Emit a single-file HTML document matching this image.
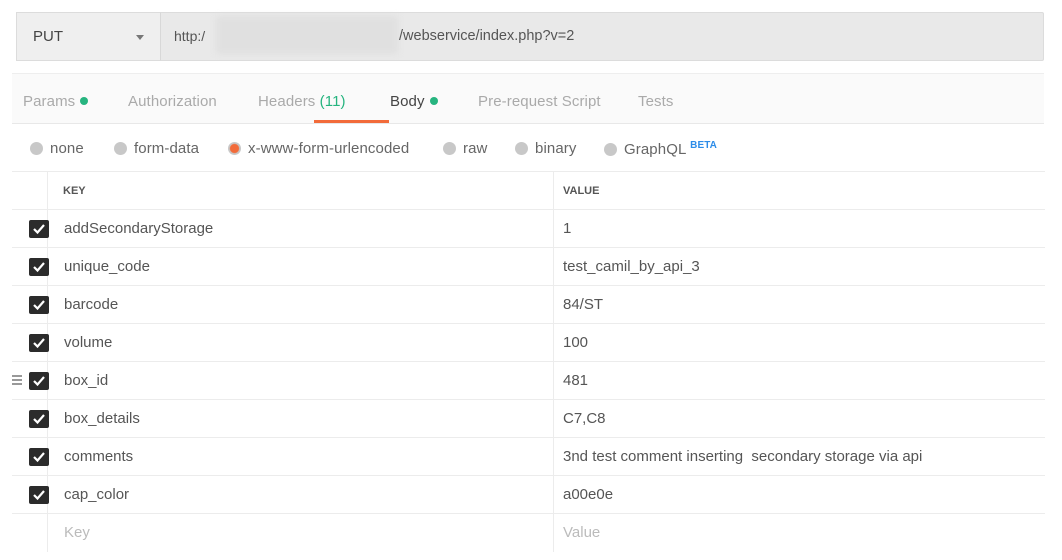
<!DOCTYPE html>
<html><head><style>
*{margin:0;padding:0;box-sizing:border-box}
body{width:1062px;height:560px;background:#fff;font-family:"Liberation Sans",sans-serif;color:#555;position:relative;overflow:hidden;font-size:15px}
.abs{position:absolute}
.url{left:16px;top:12px;width:1028px;height:49px;background:#e9e9e9;border:1px solid #dcdcdc;border-radius:2px}
.meth{left:16px;top:12px;width:145px;height:49px;background:#efefef;border:1px solid #dcdcdc;border-right:1px solid #d8d8d8}
.tabs{left:12px;top:73px;width:1032px;height:51px;background:#fafafa;border-top:1px solid #eee;border-bottom:1px solid #e8e8e8}
.t{top:93px;font-size:15px;color:#aaa;letter-spacing:0.1px}
.dot{display:inline-block;width:8px;height:8px;border-radius:50%;background:#26b47f;margin-left:5px;vertical-align:1px}
.r{top:140px;font-size:15px;color:#666;letter-spacing:0.1px}
.rd{display:inline-block;width:13px;height:13px;border-radius:50%;background:#c8c8c8;margin-right:7px;vertical-align:-2px}
.hl{left:12px;width:1033px;height:1px;background:#ececec}
.cb{left:29px;width:20px;height:18px;background:#2b2b2b;border-radius:2px}
.cb svg{position:absolute;left:3px;top:3px}
.k{left:64px;font-size:15px;color:#555}
.v{left:563px;font-size:15px;color:#555}
</style></head><body>
<div class="abs url"></div>
<div class="abs meth"></div>
<div class="abs" style="left:33px;top:28px;font-size:15px;color:#444">PUT</div>
<div class="abs" style="left:136px;top:35px;width:0;height:0;border-left:4px solid transparent;border-right:4px solid transparent;border-top:5px solid #777"></div>
<div class="abs" style="left:174px;top:28px;font-size:14px;color:#555">http:/</div>
<div class="abs" style="left:216px;top:16px;width:182px;height:38px;background:#e0e0e0;filter:blur(3px)"></div>
<div class="abs" style="left:399px;top:28px;font-size:14.5px;color:#555">/webservice/index.php?v=2</div>
<div class="abs tabs"></div>
<div class="abs t" style="left:23px">Params<span class="dot"></span></div>
<div class="abs t" style="left:128px">Authorization</div>
<div class="abs t" style="left:258px">Headers <span style="color:#26b47f">(11)</span></div>
<div class="abs t" style="left:390px;color:#444">Body<span class="dot"></span></div>
<div class="abs" style="left:314px;top:120px;width:75px;height:3px;background:#f26b3a"></div>
<div class="abs t" style="left:478px">Pre-request Script</div>
<div class="abs t" style="left:638px">Tests</div>
<div class="abs r" style="left:30px"><span class="rd"></span>none</div>
<div class="abs r" style="left:114px"><span class="rd"></span>form-data</div>
<div class="abs r" style="left:228px"><span class="rd" style="background:radial-gradient(circle,#f26b3a 45%,#c8c8c8 55%)"></span>x-www-form-urlencoded</div>
<div class="abs r" style="left:443px"><span class="rd"></span>raw</div>
<div class="abs r" style="left:515px"><span class="rd"></span>binary</div>
<div class="abs r" style="left:604px"><span class="rd"></span>GraphQL <sup style="color:#2d8ce8;font-size:10px;font-weight:bold">BETA</sup></div>
<div class="abs hl" style="top:171px"></div>
<div class="abs" style="left:47px;top:172px;width:1px;height:380px;background:#ececec"></div>
<div class="abs" style="left:553px;top:172px;width:1px;height:380px;background:#ececec"></div>
<div class="abs" style="left:63px;top:185px;font-size:11px;font-weight:bold;color:#555">KEY</div>
<div class="abs" style="left:563px;top:185px;font-size:11px;font-weight:bold;color:#555">VALUE</div>
<div class="abs hl" style="top:209px"></div>
<div class="abs hl" style="top:247px"></div>
<div class="abs hl" style="top:285px"></div>
<div class="abs hl" style="top:323px"></div>
<div class="abs hl" style="top:361px"></div>
<div class="abs hl" style="top:399px"></div>
<div class="abs hl" style="top:437px"></div>
<div class="abs hl" style="top:475px"></div>
<div class="abs hl" style="top:513px"></div>

<div class="abs cb" style="top:220px"><svg width="14" height="12"><path d="M2 6l3.5 3.5L12 2" stroke="#fff" stroke-width="2.2" fill="none"/></svg></div>
<div class="abs cb" style="top:258px"><svg width="14" height="12"><path d="M2 6l3.5 3.5L12 2" stroke="#fff" stroke-width="2.2" fill="none"/></svg></div>
<div class="abs cb" style="top:296px"><svg width="14" height="12"><path d="M2 6l3.5 3.5L12 2" stroke="#fff" stroke-width="2.2" fill="none"/></svg></div>
<div class="abs cb" style="top:334px"><svg width="14" height="12"><path d="M2 6l3.5 3.5L12 2" stroke="#fff" stroke-width="2.2" fill="none"/></svg></div>
<div class="abs cb" style="top:372px"><svg width="14" height="12"><path d="M2 6l3.5 3.5L12 2" stroke="#fff" stroke-width="2.2" fill="none"/></svg></div>
<div class="abs cb" style="top:410px"><svg width="14" height="12"><path d="M2 6l3.5 3.5L12 2" stroke="#fff" stroke-width="2.2" fill="none"/></svg></div>
<div class="abs cb" style="top:448px"><svg width="14" height="12"><path d="M2 6l3.5 3.5L12 2" stroke="#fff" stroke-width="2.2" fill="none"/></svg></div>
<div class="abs cb" style="top:486px"><svg width="14" height="12"><path d="M2 6l3.5 3.5L12 2" stroke="#fff" stroke-width="2.2" fill="none"/></svg></div>
<div class="abs" style="left:12px;top:375px;width:10px;height:10px;border-top:2px solid #999;border-bottom:2px solid #999"><div style="margin-top:2px;height:2px;background:#999"></div></div>

<div class="abs k" style="top:220px">addSecondaryStorage</div><div class="abs v" style="top:220px">1</div>
<div class="abs k" style="top:258px">unique_code</div><div class="abs v" style="top:258px">test_camil_by_api_3</div>
<div class="abs k" style="top:296px">barcode</div><div class="abs v" style="top:296px">84/ST</div>
<div class="abs k" style="top:334px">volume</div><div class="abs v" style="top:334px">100</div>
<div class="abs k" style="top:372px">box_id</div><div class="abs v" style="top:372px">481</div>
<div class="abs k" style="top:410px">box_details</div><div class="abs v" style="top:410px">C7,C8</div>
<div class="abs k" style="top:448px">comments</div><div class="abs v" style="top:448px">3nd test comment inserting&nbsp; secondary storage via api</div>
<div class="abs k" style="top:486px">cap_color</div><div class="abs v" style="top:486px">a00e0e</div>
<div class="abs k" style="top:524px;color:#bbb">Key</div><div class="abs v" style="top:524px;color:#bbb">Value</div>
</body></html>
